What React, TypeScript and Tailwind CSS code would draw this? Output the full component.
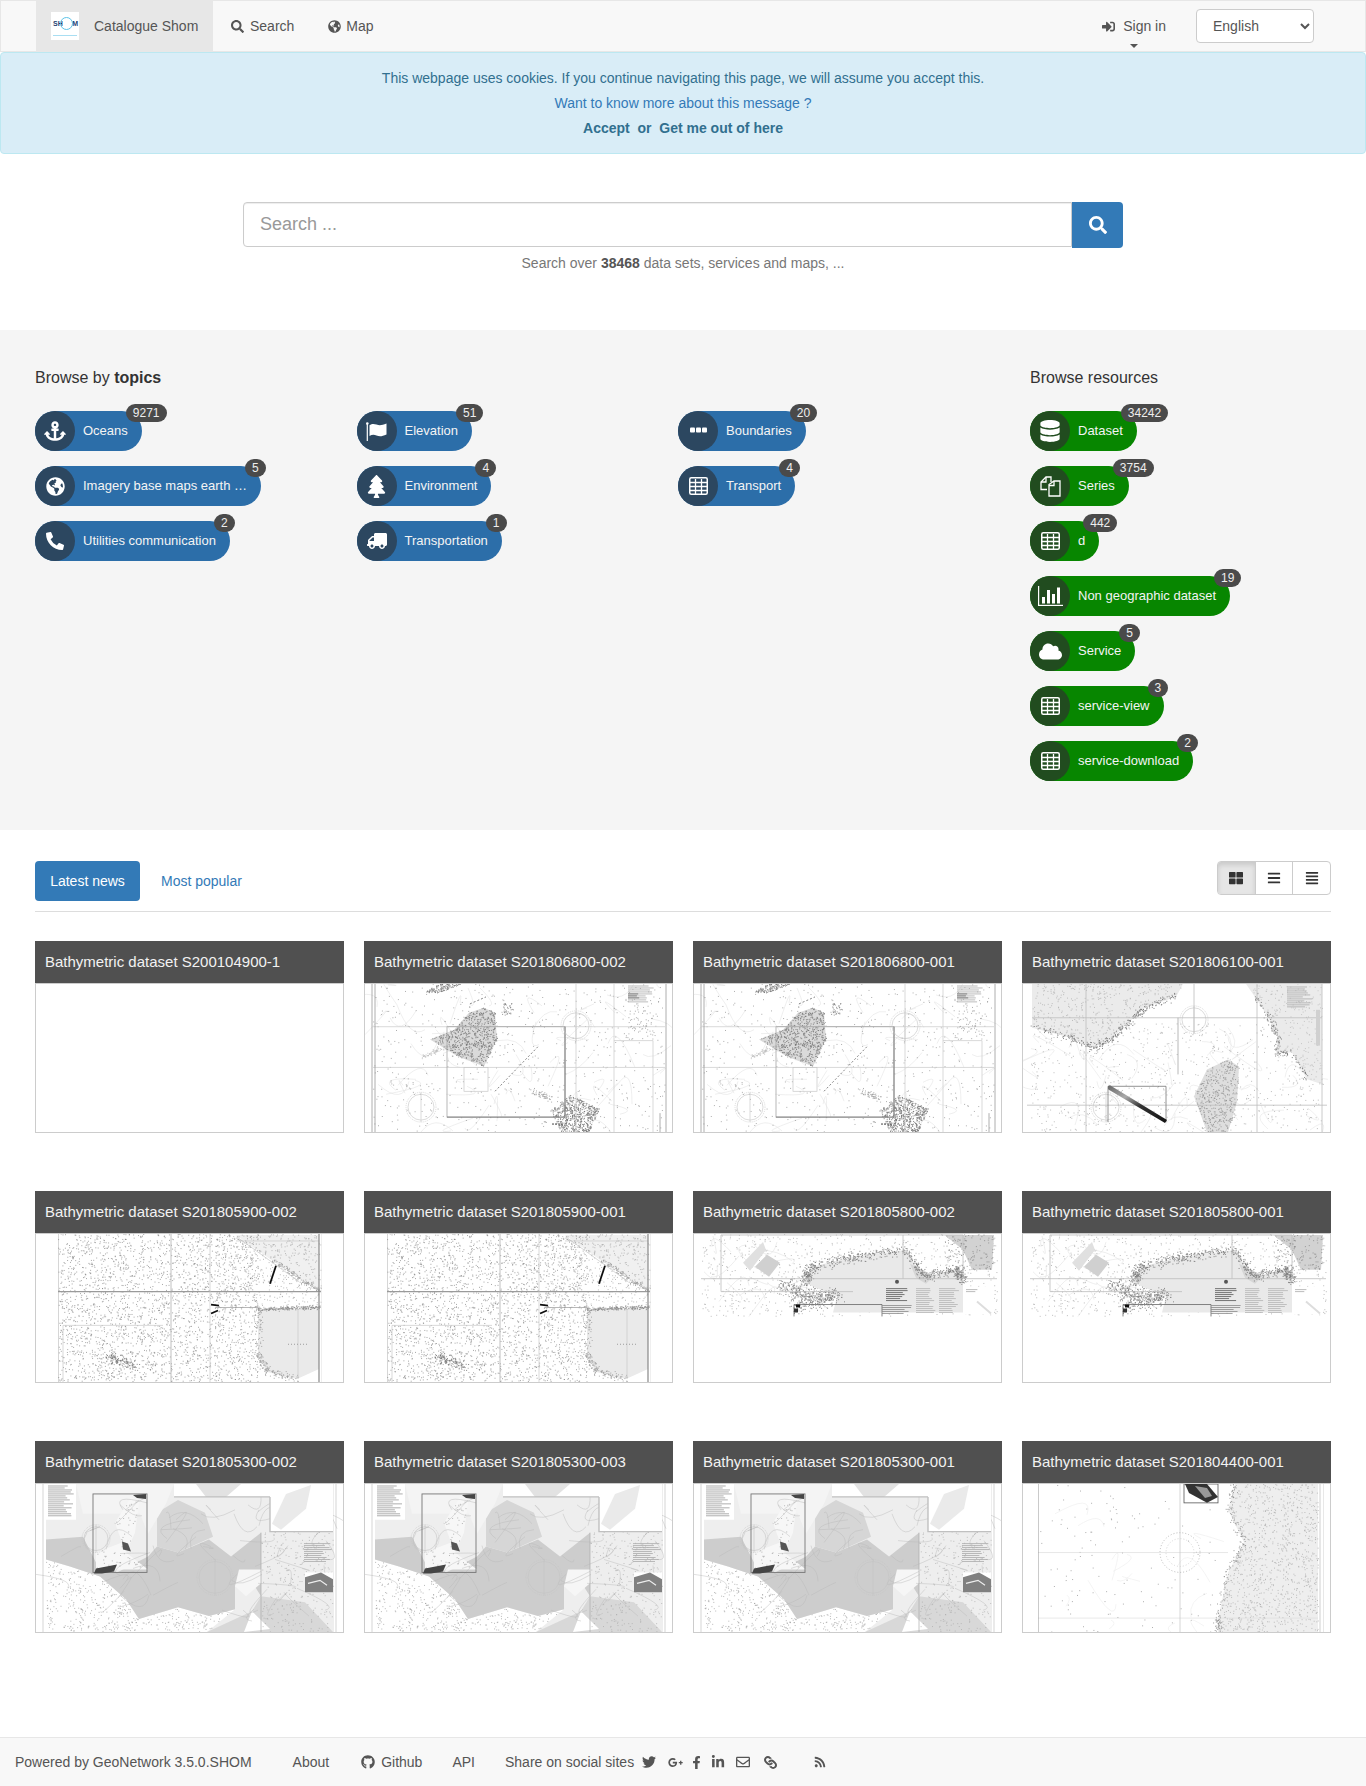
import React from "react";
import {
  FaSearch, FaGlobeAmericas, FaSignInAlt, FaAnchor, FaTree, FaTruck,
  FaPhoneAlt, FaDatabase, FaCloud, FaThLarge, FaBars, FaAlignJustify, FaTwitter, FaGooglePlusG,
  FaFacebookF, FaLinkedinIn, FaRegEnvelope, FaLink, FaRss, FaGithub,
} from "react-icons/fa";

type P = [number, number];

function rng(seed: number) {
  let s = seed >>> 0;
  return () => {
    s = (s * 1664525 + 1013904223) >>> 0;
    return s / 4294967296;
  };
}

function inPoly(x: number, y: number, poly: P[]) {
  let c = false;
  for (let i = 0, j = poly.length - 1; i < poly.length; j = i++) {
    const [xi, yi] = poly[i];
    const [xj, yj] = poly[j];
    if (yi > y !== yj > y && x < ((xj - xi) * (y - yi)) / (yj - yi) + xi) c = !c;
  }
  return c;
}

function dots(seed: number, n: number, x0: number, y0: number, x1: number, y1: number, poly?: P[]) {
  const r = rng(seed);
  let d = "";
  for (let i = 0; i < n; i++) {
    const x = x0 + r() * (x1 - x0);
    const y = y0 + r() * (y1 - y0);
    if (poly && !inPoly(x, y, poly)) continue;
    d += `M${x.toFixed(1)} ${y.toFixed(1)}h1`;
  }
  return d;
}

function coastDots(seed: number, n: number, line: P[], spread: number) {
  const r = rng(seed);
  let d = "";
  for (let i = 0; i < n; i++) {
    const k = Math.floor(r() * (line.length - 1));
    const t = r();
    const g = (r() + r() + r() - 1.5) / 1.5;
    const h = (r() + r() + r() - 1.5) / 1.5;
    const x = line[k][0] + (line[k + 1][0] - line[k][0]) * t + g * spread;
    const y = line[k][1] + (line[k + 1][1] - line[k][1]) * t + h * spread;
    d += `M${x.toFixed(1)} ${y.toFixed(1)}h1`;
  }
  return d;
}

function curves(seed: number, n: number, x0: number, y0: number, x1: number, y1: number) {
  const r = rng(seed);
  let d = "";
  for (let i = 0; i < n; i++) {
    const ax = x0 + r() * (x1 - x0);
    const ay = y0 + r() * (y1 - y0);
    d += `M${ax.toFixed(0)} ${ay.toFixed(0)}q${(r() * 50 - 25).toFixed(0)} ${(r() * 50 - 25).toFixed(0)} ${(r() * 70 - 35).toFixed(0)} ${(r() * 50 - 25).toFixed(0)}`;
  }
  return d;
}

const pts = (p: P[]) => p.map((q) => q.join(",")).join(" ");

function Compass({ x, y, r }: { x: number; y: number; r: number }) {
  return (
    <g fill="none" stroke="#c4c4c4" strokeWidth="0.6">
      <circle cx={x} cy={y} r={r} strokeDasharray="1 1" />
      <circle cx={x} cy={y} r={r - 2} />
      <path d={`M${x} ${y - r}V${y + r}`} />
    </g>
  );
}

function TextBlock({ x, y, w, rows, gap = 2, color = "#8a8a8a" }: { x: number; y: number; w: number; rows: number; gap?: number; color?: string }) {
  let d = "";
  const r = rng(x * 31 + y * 17);
  for (let i = 0; i < rows; i++) d += `M${x} ${y + i * gap}h${(w * (0.6 + r() * 0.4)).toFixed(1)}`;
  return <path d={d} stroke={color} strokeWidth="0.8" fill="none" />;
}

function Svg({ children }: { children: React.ReactNode }) {
  return (
    <svg viewBox="0 0 307 149" className="block h-full w-full" preserveAspectRatio="none">
      <defs>
        <filter id="soft" x="0" y="0" width="100%" height="100%">
          <feGaussianBlur stdDeviation="0.3" />
        </filter>
      </defs>
      <g filter="url(#soft)">{children}</g>
    </svg>
  );
}

function MapA() {
  const island: P[] = [[119, 24], [130, 29], [132, 56], [119, 83], [93, 73], [65, 56], [89, 46], [104, 29]];
  const south: P[] = [[185, 128], [205, 112], [234, 126], [224, 149], [196, 149]];
  const north: P[] = [[60, 8], [74, 0], [96, 0], [84, 5], [70, 10]];
  return (
    <Svg>
      <path d={curves(11, 60, 6, 0, 300, 149)} fill="none" stroke="#dedede" strokeWidth="0.5" />
      <path d={dots(12, 620, 8, 0, 300, 149)} stroke="#8a8a8a" strokeWidth="0.7" />
      <polygon points={pts(island)} fill="#dadada" />
      <path d={dots(13, 1300, 60, 20, 135, 86, island)} stroke="#7a7a7a" strokeWidth="0.9" />
      <path d={coastDots(14, 70, [[84, 62], [56, 74]], 3)} stroke="#bbb" strokeWidth="0.7" />
      <path d={dots(15, 260, 58, 0, 98, 10, north)} stroke="#777" strokeWidth="0.9" />
      <path d={dots(16, 900, 183, 110, 236, 149, south)} stroke="#777" strokeWidth="0.9" />
      <path d={dots(17, 34, 137, 19, 148, 34)} stroke="#777" strokeWidth="0.8" />
      <path d={coastDots(18, 50, [[166, 108], [184, 116]], 5)} stroke="#999" strokeWidth="0.8" />
      <path d="M105 20l16-7M130 108l44-46" stroke="#666" strokeWidth="0.8" strokeDasharray="2 2" fill="none" />
      <path d="M8 43H300M8 84H300M211 0V149M249 0V149M288 57V149M249 57H288" stroke="#cfcfcf" strokeWidth="0.8" fill="none" />
      <rect x="82" y="43" width="118" height="91" fill="none" stroke="#a6a6a6" strokeWidth="0.8" />
      <path d="M82 134H200V43" fill="none" stroke="#7a7a7a" strokeWidth="0.9" />
      <rect x="99" y="84" width="24" height="24" fill="none" stroke="#c7c7c7" strokeWidth="0.7" />
      <path d="M7 0V149M10 0V149M301 0V149M295 130V149" stroke="#8c8c8c" strokeWidth="0.7" />
      <Compass x={56} y={124} r={15} />
      <Compass x={211} y={42} r={15} />
      <TextBlock x={263} y={2} w={27} rows={9} color="#aaa" />
      <TextBlock x={263} y={10} w={13} rows={3} color="#666" />
      <path d={dots(19, 60, 262, 22, 292, 56)} stroke="#999" strokeWidth="0.8" />
      <path d="M187 141h12" stroke="#444" strokeWidth="1" strokeDasharray="2 1" />
    </Svg>
  );
}

function MapB() {
  const a: P[] = [[9, 0], [160, 0], [153, 13], [123, 23], [105, 39], [88, 56], [70, 64], [44, 53], [9, 44]];
  const b: P[] = [[223, 0], [299, 0], [299, 101], [284, 96], [269, 69], [253, 69], [255, 53], [245, 33], [232, 13]];
  const c: P[] = [[205, 76], [216, 83], [214, 119], [205, 149], [184, 149], [171, 113], [184, 86]];
  return (
    <Svg>
      <path d={curves(21, 60, 8, 40, 300, 149)} fill="none" stroke="#e0e0e0" strokeWidth="0.5" />
      <path d={dots(22, 760, 8, 40, 300, 149)} stroke="#a0a0a0" strokeWidth="0.7" />
      <polygon points={pts(a)} fill="#ebebeb" />
      <polygon points={pts(b)} fill="#ebebeb" />
      <polygon points={pts(c)} fill="#dedede" />
      <path d={dots(23, 600, 9, 0, 160, 64, a)} stroke="#a8a8a8" strokeWidth="0.7" />
      <path d={dots(24, 360, 223, 0, 299, 101, b)} stroke="#b5b5b5" strokeWidth="0.7" />
      <path d={dots(25, 620, 170, 76, 217, 149, c)} stroke="#8f8f8f" strokeWidth="0.8" />
      <path d={coastDots(26, 300, [[153, 13], [123, 23], [105, 39], [88, 56], [70, 64], [44, 53], [9, 44]], 6)} stroke="#777" strokeWidth="0.9" />
      <path d={coastDots(27, 150, [[232, 13], [245, 33], [255, 53], [253, 69], [269, 69], [284, 96]], 5)} stroke="#777" strokeWidth="0.9" />
      <path d="M9 34H299M4 122H304M63 0V149M171 0V50M234 0V149M299 0V149" stroke="#bdbdbd" strokeWidth="0.8" fill="none" />
      <path d="M155 34V91" stroke="#999" strokeWidth="0.7" />
      <Compass x={83} y={124} r={15} />
      <Compass x={171} y={36} r={14} />
      <path d="M85 139V103H143V139" fill="none" stroke="#777" strokeWidth="0.8" />
      <defs>
        <linearGradient id="bdiag" x1="0" y1="0" x2="1" y2="1">
          <stop offset="0" stopColor="#666" />
          <stop offset="0.3" stopColor="#aaa" />
          <stop offset="0.55" stopColor="#333" />
          <stop offset="1" stopColor="#111" />
        </linearGradient>
      </defs>
      <polygon points="85,103 87,102 144,137 142,140 85,106" fill="url(#bdiag)" />
      <TextBlock x={264} y={3} w={26} rows={11} color="#aaa" />
      <rect x="293" y="26" width="4" height="36" fill="#d0d0d0" />
    </Svg>
  );
}

function MapC() {
  const top: P[] = [[200, 1], [283, 1], [283, 58], [265, 46], [235, 26]];
  const low: P[] = [[222, 76], [283, 76], [283, 136], [261, 146], [231, 139], [222, 123]];
  return (
    <Svg>
      <rect x="22" y="0" width="264" height="149" fill="#fff" />
      <polygon points={pts(top)} fill="#f0f0f0" />
      <polygon points={pts(low)} fill="#eaeaea" />
      <path d={dots(31, 2600, 22, 0, 222, 149)} stroke="#808080" strokeWidth="0.7" />
      <path d={dots(32, 500, 180, 0, 285, 76)} stroke="#a0a0a0" strokeWidth="0.7" />
      <path d={coastDots(33, 200, [[222, 76], [283, 74]], 3)} stroke="#888" strokeWidth="0.8" />
      <path d={coastDots(34, 200, [[222, 76], [222, 123], [231, 139], [261, 146]], 6)} stroke="#999" strokeWidth="0.8" />
      <path d={coastDots(35, 130, [[235, 26], [265, 46], [283, 58]], 5)} stroke="#999" strokeWidth="0.8" />
      <path d={coastDots(36, 120, [[70, 122], [100, 134]], 8)} stroke="#777" strokeWidth="0.9" />
      <path d="M22 58H285" stroke="#9a9a9a" strokeWidth="1.1" />
      <path d="M135 0V149" stroke="#b0b0b0" strokeWidth="0.8" />
      <path d="M174 0V149M200 7H283M27 92H127M27 92V149M262 76V146M201 3l62 45" stroke="#c8c8c8" strokeWidth="0.7" fill="none" />
      <path d="M180 74H222" stroke="#999" strokeWidth="0.7" />
      <path d="M22 0V149" stroke="#999" strokeWidth="0.8" />
      <path d="M283 0V149" stroke="#888" strokeWidth="1.2" />
      <path d="M286 0V149" stroke="#d0d0d0" strokeWidth="0.7" />
      <path d="M240 32L234 50" stroke="#111" strokeWidth="1.8" />
      <path d="M175 71l8 1M175 80l7-3" stroke="#111" strokeWidth="1.8" />
      <path d="M252 111h19" stroke="#888" strokeWidth="0.8" strokeDasharray="1 2" />
    </Svg>
  );
}

function MapD() {
  const sea: P[] = [[118, 33], [159, 23], [212, 16], [229, 43], [261, 36], [269, 46], [269, 79], [139, 79], [143, 63], [110, 49]];
  return (
    <Svg>
      <path d={dots(41, 900, 7, 0, 303, 83)} stroke="#a0a0a0" strokeWidth="0.7" />
      <path d={curves(42, 20, 7, 0, 120, 70)} fill="none" stroke="#dcdcdc" strokeWidth="0.5" />
      <polygon points={pts(sea)} fill="#e9e9e9" />
      <polygon points="49,29 69,8 72,16 56,37" fill="#e0e0e0" />
      <polygon points="61,33 73,21 86,29 75,43" fill="#d0d0d0" />
      <polygon points="251,1 300,1 298,36 278,36 269,16" fill="#d2d2d2" />
      <polygon points="216,30 240,42 232,50 222,44" fill="#d6d6d6" />
      <path d={coastDots(43, 700, [[110, 49], [118, 33], [159, 23], [212, 16], [229, 43], [261, 36], [269, 46]], 8)} stroke="#7c7c7c" strokeWidth="0.9" />
      <path d={coastDots(44, 420, [[88, 50], [110, 62], [143, 63], [100, 73]], 12)} stroke="#808080" strokeWidth="0.9" />
      <path d={dots(45, 130, 251, 1, 300, 36)} stroke="#888" strokeWidth="0.8" />
      <path d="M27 1V58H159M27 1H269V45M7 45H303M209 1V45" fill="none" stroke="#bdbdbd" strokeWidth="0.8" />
      <rect x="269" y="53" width="31" height="28" fill="#fff" />
      <TextBlock x={272} y={56} w={12} rows={2} color="#aaa" />
      <path d="M283 68l14 12" stroke="#ddd" strokeWidth="2" />
      <path d="M100 83V71H188V83" fill="none" stroke="#666" strokeWidth="0.8" />
      <rect x="102" y="71" width="4" height="3" fill="#111" />
      <rect x="100" y="75" width="4" height="4" fill="#333" />
      <TextBlock x={192} y={55} w={22} rows={7} gap={2} color="#555" />
      <TextBlock x={222} y={55} w={20} rows={13} color="#b4b4b4" />
      <TextBlock x={245} y={55} w={20} rows={13} color="#b4b4b4" />
      <TextBlock x={188} y={72} w={30} rows={5} color="#888" />
      <circle cx="203" cy="48" r="2" fill="#555" />
    </Svg>
  );
}

function MapE() {
  const land: P[] = [[10, 56], [47, 53], [60, 79], [81, 89], [112, 73], [121, 63], [142, 69], [173, 56], [195, 73], [225, 49], [225, 113], [208, 86], [199, 103], [199, 126], [173, 133], [142, 124], [103, 136], [90, 116], [64, 93], [34, 83], [10, 76]];
  const sea: P[] = [[10, 76], [34, 83], [64, 93], [90, 116], [103, 136], [142, 124], [173, 133], [199, 126], [171, 149], [10, 149]];
  const est: P[] = [[79, 39], [95, 13], [103, 18], [99, 49], [90, 69], [112, 86], [60, 86], [60, 69], [86, 59]];
  return (
    <Svg>
      <rect x="10" y="0" width="288" height="149" fill="#eeeeee" />
      <polygon points={pts(sea)} fill="#fff" />
      <path d={dots(51, 900, 10, 76, 200, 149, sea)} stroke="#9a9a9a" strokeWidth="0.7" />
      <polygon points={pts(land)} fill="#cdcdcd" />
      <polygon points="121,29 142,16 169,29 177,53 142,69 121,63" fill="#d6d6d6" />
      <polygon points="40,0 138,0 130,20 112,50 104,30 80,30 47,30" fill="#f4f4f4" />
      <polygon points="225,113 269,119 297,149 171,149 216,128" fill="#d8d8d8" />
      <polygon points="216,128 234,146 208,149" fill="#fff" />
      <polygon points={pts(est)} fill="#f7f7f7" />
      <path d={dots(52, 180, 60, 13, 112, 86, est)} stroke="#999" strokeWidth="0.7" />
      <polygon points="203,86 225,86 225,100 210,113 199,103" fill="#f6f6f6" />
      <path d={curves(53, 60, 30, 15, 290, 135)} fill="none" stroke="#b8b8b8" strokeWidth="0.45" />
      <path d={dots(55, 300, 225, 48, 297, 149)} stroke="#aaa" strokeWidth="0.7" />
      <rect x="138" y="0" width="96" height="13" fill="#fff" />
      <polygon points="160,0 205,0 190,13 170,13" fill="#e2e2e2" />
      <rect x="234" y="0" width="63" height="48" fill="#fff" />
      <polygon points="236,40 250,10 275,1 270,25 245,46" fill="#eaeaea" />
      <path d="M234 13H138M234 13V48H297" fill="none" stroke="#c0c0c0" strokeWidth="1.4" />
      <rect x="10" y="0" width="30" height="36" fill="#fff" />
      <TextBlock x={12} y={2} w={26} rows={16} color="#999" />
      <rect x="269" y="89" width="28" height="20" fill="#fff" />
      <polygon points="269,94 285,89 297,96 297,109 269,109" fill="#808080" />
      <path d="M272 100l12-3 7 5" stroke="#eee" strokeWidth="1.2" fill="none" />
      <TextBlock x={268} y={60} w={28} rows={10} color="#aaa" />
      <path d="M225 49V149" stroke="#aaa" strokeWidth="0.7" />
      <path d="M7 0V149M300 0V149" stroke="#bbb" strokeWidth="0.6" />
      <Compass x={179} y={94} r={18} />
      <Compass x={60} y={55} r={14} />
      <rect x="57" y="10" width="54" height="79" fill="none" stroke="#757575" strokeWidth="0.9" />
      <polygon points="58,90 60,85 81,81 78,88 66,90" fill="#444" />
      <polygon points="86,58 92,60 95,68 87,66" fill="#555" />
      <polygon points="97,11 110,10 110,15 101,14" fill="#444" />
    </Svg>
  );
}

function MapF() {
  const land: P[] = [[212, 0], [295, 0], [295, 149], [195, 149], [195, 136], [205, 89], [221, 59], [205, 26]];
  return (
    <Svg>
      <polygon points={pts(land)} fill="#eeeeee" />
      <path d={dots(61, 1200, 195, 0, 295, 149, land)} stroke="#a8a8a8" strokeWidth="0.7" />
      <path d={coastDots(62, 200, [[212, 0], [205, 26], [221, 59], [205, 89], [195, 136], [195, 149]], 6)} stroke="#888" strokeWidth="0.8" />
      <path d={dots(63, 120, 17, 0, 195, 149)} stroke="#999" strokeWidth="0.8" />
      <path d={curves(64, 14, 20, 20, 190, 149)} fill="none" stroke="#e8e8e8" strokeWidth="0.5" />
      <path d="M15 135H295M15 69H205" stroke="#d8d8d8" strokeWidth="0.6" fill="none" />
      <path d="M157 0V149" stroke="#c4c4c4" strokeWidth="0.7" />
      <path d="M15 0V149" stroke="#888" strokeWidth="0.9" />
      <path d="M297 0V149M301 0V149" stroke="#bbb" strokeWidth="0.7" />
      <g fill="none" stroke="#aaa" strokeWidth="0.8">
        <circle cx="157" cy="69" r="20" strokeDasharray="1 2" />
        <circle cx="157" cy="69" r="14" strokeDasharray="1 2" stroke="#ccc" />
      </g>
      <rect x="161" y="0" width="34" height="19" fill="#fff" stroke="#555" strokeWidth="0.8" />
      <polygon points="162,0 184,0 195,13 184,19 166,9" fill="#333" />
      <polygon points="172,2 184,4 189,12 182,14" fill="#999" />
    </Svg>
  );
}

function TableIcon() {
  return (
    <svg width="19" height="18" viewBox="0 0 19 18" fill="none" stroke="#fff">
      <rect x="0.75" y="0.75" width="17.5" height="16.5" rx="1.5" strokeWidth="1.5" />
      <path d="M0.5 5.5H18.5M0.5 9.5H18.5M0.5 13.5H18.5M6.5 2V17M12.5 2V17" strokeWidth="1.3" />
    </svg>
  );
}

function FilesIcon() {
  return (
    <svg width="21" height="21" viewBox="0 0 21 21" fill="none" stroke="#fff" strokeWidth="1.3">
      <path d="M7 13.5H1V6L6 1H11V6" />
      <path d="M6 1V6H1" />
      <path d="M9 20V8.5L14 5H20V20Z" />
      <path d="M14 5V9.5H9" />
    </svg>
  );
}

function ChartIcon() {
  return (
    <svg width="25" height="20" viewBox="0 0 25 20" fill="#fff">
      <rect x="0" y="0" width="1.2" height="20" />
      <rect x="0" y="18.8" width="25" height="1.2" />
      <rect x="4" y="11" width="3" height="6.5" />
      <rect x="9" y="4" width="3" height="13.5" />
      <rect x="14" y="8" width="3" height="9.5" />
      <rect x="19" y="1.5" width="3" height="16" />
    </svg>
  );
}

function DotsIcon() {
  return (
    <svg width="17" height="6" viewBox="0 0 17 6" fill="#fff" className="mb-[2px]">
      <rect x="0" y="0.5" width="5" height="5" rx="1" />
      <rect x="6" y="0.5" width="5" height="5" rx="1" />
      <rect x="12" y="0.5" width="5" height="5" rx="1" />
    </svg>
  );
}

function FlagIcon() {
  return (
    <svg width="21" height="19" viewBox="0 0 21 19" fill="#fff">
      <circle cx="1.3" cy="1.5" r="1.3" />
      <rect x="0.7" y="2" width="1.2" height="17" />
      <path d="M3.5 3.2C6 1.5 8 1.6 10.5 2.6C13.5 3.8 16 3.4 20.5 1.6V12.4C16 14.4 13.5 14.6 10.5 13.4C8 12.4 6 12.4 3.5 14Z" />
    </svg>
  );
}

function Pill({ icon, label, count, green }: { icon: React.ReactNode; label: string; count: string; green?: boolean }) {
  return (
    <div className={`relative flex h-10 w-fit items-center rounded-[20px] pl-[48px] pr-[14px] text-[13px] text-[#f4f4f4] ${green ? "bg-[#078600]" : "bg-[#2c6ea9]"}`}>
      <span className={`absolute left-0 top-0 flex h-10 w-10 items-center justify-center rounded-full text-[20px] text-white ${green ? "bg-[#214c1f]" : "bg-[#2c4760]"}`}>{icon}</span>
      <span className="block whitespace-nowrap">{label}</span>
      <span className="absolute left-full top-[-7px] ml-[-16px] flex h-[18px] min-w-[18px] items-center justify-center rounded-[9px] bg-[#4a4a4a] px-[7px] text-[12px] text-[#eee]">{count}</span>
    </div>
  );
}

const cards: { t: string; m: React.ReactNode }[] = [
  { t: "Bathymetric dataset S200104900-1", m: null },
  { t: "Bathymetric dataset S201806800-002", m: <MapA /> },
  { t: "Bathymetric dataset S201806800-001", m: <MapA /> },
  { t: "Bathymetric dataset S201806100-001", m: <MapB /> },
  { t: "Bathymetric dataset S201805900-002", m: <MapC /> },
  { t: "Bathymetric dataset S201805900-001", m: <MapC /> },
  { t: "Bathymetric dataset S201805800-002", m: <MapD /> },
  { t: "Bathymetric dataset S201805800-001", m: <MapD /> },
  { t: "Bathymetric dataset S201805300-002", m: <MapE /> },
  { t: "Bathymetric dataset S201805300-003", m: <MapE /> },
  { t: "Bathymetric dataset S201805300-001", m: <MapE /> },
  { t: "Bathymetric dataset S201804400-001", m: <MapF /> },
];

export default function App() {
  return (
    <div className="min-h-[1786px] bg-white font-['Liberation_Sans',Arial,sans-serif] text-[14px] leading-[20px] text-[#333]">
      <nav className="relative flex h-[52px] items-center border border-[#e7e7e7] bg-[#f8f8f8] text-[#555]">
        <div className="ml-[35px] flex h-[50px] w-[177px] items-center gap-[15px] bg-[#e7e7e7] pl-[15px]">
          <div className="relative h-7 w-7 shrink-0 bg-white">
            <span className="absolute left-[2px] top-[7px] text-[7px] font-bold leading-[9px] text-[#1d3f72]">SH</span>
            <span className="absolute right-[1px] top-[7px] text-[7px] font-bold leading-[9px] text-[#1d3f72]">M</span>
            <span className="absolute left-[9px] top-[5px] h-[13px] w-[13px] rounded-full border border-[#5cc3e8] bg-transparent"></span>
            <span className="absolute bottom-[4px] left-[2px] h-px w-6 bg-[#a9def2]"></span>
          </div>
          <span>Catalogue Shom</span>
        </div>
        <a className="ml-[18px] flex items-center gap-[6px]"><FaSearch className="text-[13px]" />Search</a>
        <a className="ml-[34px] flex items-center gap-[5px]"><FaGlobeAmericas className="text-[13px]" />Map</a>
        <a className="relative ml-auto flex items-center gap-[8px]">
          <FaSignInAlt className="text-[13px]" />Sign in
          <span className="absolute left-[28px] top-[28px] h-0 w-0 border-x-[4px] border-t-[4px] border-x-transparent border-t-[#555]"></span>
        </a>
        <select className="ml-[30px] mr-[51px] h-[34px] w-[118px] rounded-[4px] border border-[#ccc] bg-white pl-[12px] text-[#555]" defaultValue="en">
          <option value="en">English</option>
        </select>
      </nav>

      <div className="h-[102px] rounded-[4px] border border-[#bce8f1] bg-[#d9edf7] pt-[13px] text-center leading-[25px] text-[#31708f]">
        <div>This webpage uses cookies. If you continue navigating this page, we will assume you accept this.</div>
        <div className="text-[#337ab7]">Want to know more about this message ?</div>
        <div className="font-bold">Accept&nbsp; or&nbsp; Get me out of here</div>
      </div>

      <section className="h-[176px] pt-[48px]">
        <div className="mx-auto flex w-[880px] items-start">
          <input
            className="h-[45px] flex-1 rounded-l-[4px] border border-[#ccc] px-4 text-[18px] shadow-[inset_0_1px_1px_rgba(0,0,0,0.075)] outline-none placeholder:text-[#999]"
            placeholder="Search ..."
          />
          <button className="flex h-[46px] w-[51px] items-center justify-center rounded-r-[4px] bg-[#337ab7] text-[18px] text-white"><FaSearch /></button>
        </div>
        <p className="mt-[5px] text-center text-[#777]">Search over <b className="text-[#555]">38468</b> data sets, services and maps, ...</p>
      </section>

      <section className="flex h-[500px] bg-[#f5f5f5] pl-[35px] pt-[37px]">
        <div className="w-[995px]">
          <h2 className="text-[16px] leading-[22px]">Browse by <b>topics</b></h2>
          <div className="mt-[22px] grid grid-cols-[321.5px_321.5px_321.5px] gap-y-[15px]">
            <Pill icon={<FaAnchor className="text-[22px]" />} label="Oceans" count="9271" />
            <Pill icon={<FlagIcon />} label="Elevation" count="51" />
            <Pill icon={<DotsIcon />} label="Boundaries" count="20" />
            <Pill icon={<FaGlobeAmericas className="text-[19px]" />} label="Imagery base maps earth  …" count="5" />
            <Pill icon={<FaTree className="text-[23px]" />} label="Environment" count="4" />
            <Pill icon={<TableIcon />} label="Transport" count="4" />
            <Pill icon={<FaPhoneAlt className="text-[18px]" />} label="Utilities communication" count="2" />
            <Pill icon={<FaTruck className="-scale-x-100" />} label="Transportation" count="1" />
          </div>
        </div>
        <div>
          <h2 className="text-[16px] leading-[22px]">Browse resources</h2>
          <div className="mt-[22px] flex flex-col gap-[15px]">
            <Pill green icon={<FaDatabase className="text-[22px]" />} label="Dataset" count="34242" />
            <Pill green icon={<FilesIcon />} label="Series" count="3754" />
            <Pill green icon={<TableIcon />} label="d" count="442" />
            <Pill green icon={<ChartIcon />} label="Non geographic dataset" count="19" />
            <Pill green icon={<FaCloud className="text-[23px]" />} label="Service" count="5" />
            <Pill green icon={<TableIcon />} label="service-view" count="3" />
            <Pill green icon={<TableIcon />} label="service-download" count="2" />
          </div>
        </div>
      </section>

      <section className="px-[35px] pt-[31px]">
        <div className="flex h-[51px] items-start border-b border-[#ddd]">
          <a className="flex h-10 w-[105px] items-center justify-center rounded-[4px] bg-[#337ab7] text-white">Latest news</a>
          <a className="ml-[21px] flex h-10 items-center text-[#337ab7]">Most popular</a>
          <div className="ml-auto flex h-[34px] w-[114px] rounded-[4px] border border-[#ccc] text-[#333]">
            <span className="flex flex-1 items-center justify-center rounded-l-[3px] bg-[#e6e6e6] shadow-[inset_0_3px_5px_rgba(0,0,0,0.125)]"><FaThLarge /></span>
            <span className="flex flex-1 items-center justify-center border-l border-[#ccc]"><FaBars /></span>
            <span className="flex flex-1 items-center justify-center border-l border-[#ccc]"><FaAlignJustify /></span>
          </div>
        </div>
        <div className="mt-[29px] grid grid-cols-4 gap-x-[20px] gap-y-[58px]">
          {cards.map((c) => (
            <article key={c.t} className="h-[192px] bg-white">
              <h3 className="flex h-[42px] items-center bg-[#505050] px-[10px] text-[15px] font-normal text-[#f2f2f2]">{c.t}</h3>
              <div className="h-[150px] border border-[#ccc]">{c.m}</div>
            </article>
          ))}
        </div>
      </section>

      <footer className="mt-[104px] flex h-[49px] items-center border-t border-[#e7e7e7] bg-[#f8f8f8] pl-[15px] text-[#555]">
        <span>Powered by GeoNetwork 3.5.0.SHOM</span>
        <a className="ml-[41px]">About</a>
        <a className="ml-[32px] flex items-center gap-[6px]"><FaGithub />Github</a>
        <a className="ml-[30px]">API</a>
        <span className="ml-[30px]">Share on social sites</span>
        <FaTwitter className="ml-[8px]" />
        <FaGooglePlusG className="ml-[12px] text-[15px]" />
        <FaFacebookF className="ml-[6.5px] text-[13px]" />
        <FaLinkedinIn className="ml-[8.5px]" />
        <FaRegEnvelope className="ml-[11px]" />
        <FaLink className="ml-[14px] rotate-90 text-[13px]" />
        <FaRss className="ml-[37px] text-[12px]" />
      </footer>
    </div>
  );
}
